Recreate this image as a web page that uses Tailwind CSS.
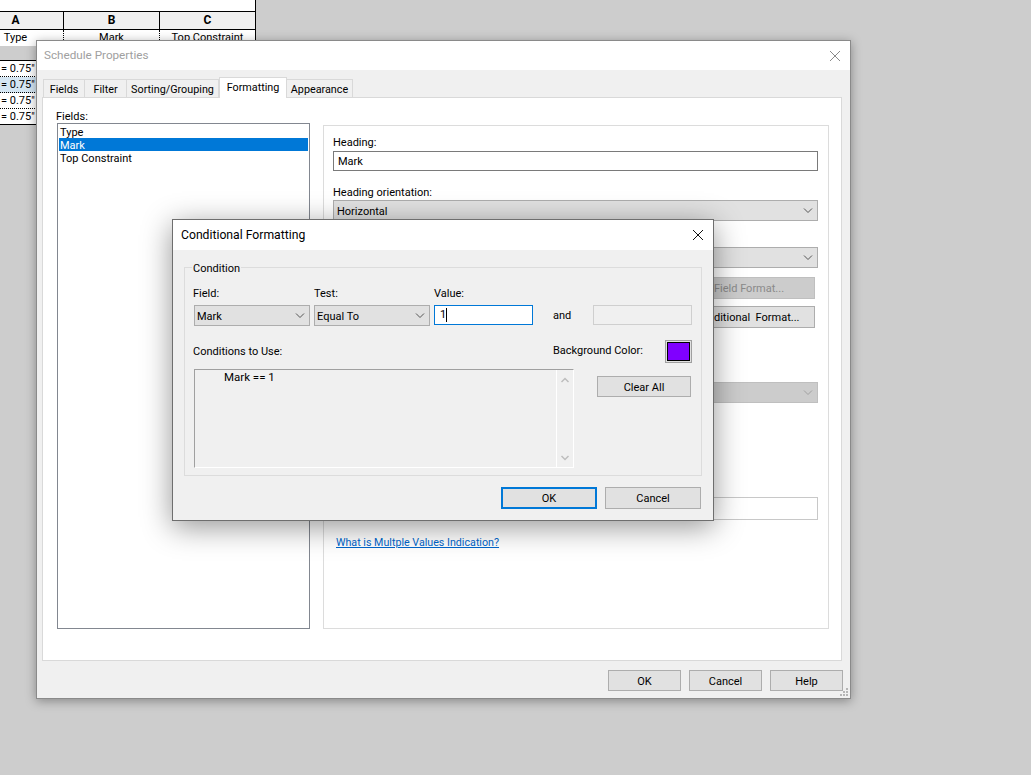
<!DOCTYPE html>
<html lang="en">
<head>
    <meta charset="UTF-8">
    <title>Conditional Formatting</title>
    <script src="https://cdn.jsdelivr.net/npm/@tailwindcss/browser@4"></script>
</head>
<body class="m-0">
<div class="relative w-[1031px] h-[775px] overflow-hidden bg-[#cdcdcd] font-['Roboto',sans-serif] text-[11px] leading-[16px] text-black">

    <!-- schedule sheet behind the dialogs -->
    <div class="absolute left-0 top-0 w-[256px] border-r border-black">
        <div class="h-[12px] bg-white border-b border-black"></div>
        <div class="grid grid-cols-[64px_96px_95px] h-[18px] bg-[#f0f0f0] border-b border-black font-bold text-[12px] text-center leading-[17px]">
            <div class="border-r border-black pr-[32px]">A</div>
            <div class="border-r border-black">B</div>
            <div>C</div>
        </div>
        <div class="grid grid-cols-[64px_96px_95px] h-[16px] bg-white text-center">
            <div class="border-r border-dotted border-black pr-[32px]">Type</div>
            <div class="border-r border-dotted border-black">Mark</div>
            <div>Top Constraint</div>
        </div>
        <div class="h-[14px] bg-[#cdcdcd]"></div>
        <div class="border-y border-black bg-white leading-[15px] whitespace-nowrap">
            <div class="h-[16px] border-b border-dotted border-black pl-[1px]">= 0.75"</div>
            <div class="h-[16px] border-b border-dotted border-black bg-[#d5e6f3] pl-[1px]">= 0.75"</div>
            <div class="h-[16px] border-b border-dotted border-black pl-[1px]">= 0.75"</div>
            <div class="h-[15px] pl-[1px]">= 0.75"</div>
        </div>
    </div>

    <!-- Schedule Properties window -->
    <div class="absolute left-[36px] top-[40px] w-[815px] h-[659px] bg-[#f0f0f0] border border-[#8a8a8a] shadow-[0_2px_10px_rgba(0,0,0,0.35)] flex flex-col">
        <div class="h-[29px] shrink-0 bg-white flex items-center justify-between pl-[7px] pr-[9px]">
            <span class="text-[#a0a0a0] text-[11.7px] -mt-[2px]">Schedule Properties</span>
            <svg class="w-[12px] h-[12px]" viewBox="0 0 12 12" fill="none" stroke="#8a8a8a" stroke-width="1"><path d="M1 1l10 10M11 1L1 11"/></svg>
        </div>

        <div class="flex items-end h-[27px] shrink-0 pl-[6px] relative z-10 text-[10.8px]">
            <div class="w-[42px] h-[18px] pt-[2px] flex items-center justify-center bg-[#f0f0f0] border border-b-0 border-[#d9d9d9]">Fields</div>
            <div class="w-[42px] h-[18px] pt-[2px] flex items-center justify-center bg-[#f0f0f0] border border-l-0 border-b-0 border-[#d9d9d9]">Filter</div>
            <div class="w-[92px] h-[18px] pt-[2px] flex items-center justify-center bg-[#f0f0f0] border border-l-0 border-b-0 border-[#d9d9d9]">Sorting/Grouping</div>
            <div class="w-[68px] h-[21px] -mb-px flex items-center justify-center bg-white border border-b-0 border-[#d9d9d9]">Formatting</div>
            <div class="w-[66px] h-[18px] pt-[2px] flex items-center justify-center bg-[#f0f0f0] border border-l-0 border-b-0 border-[#d9d9d9]">Appearance</div>
        </div>

        <div class="ml-[5px] mr-[8px] h-[564px] shrink-0 bg-white border border-[#d9d9d9] flex pl-[14px] pr-[12px]">
            <div class="w-[253px] shrink-0 pt-[11px]">
                <div class="h-[14px] -ml-[1px]">Fields:</div>
                <div class="h-[506px] border border-[#828790] px-[1px] pt-[1px]">
                    <div class="h-[13px] pl-[1px] leading-[15px]">Type</div>
                    <div class="h-[13px] pl-[1px] leading-[15px] bg-[#0078d7] text-white">Mark</div>
                    <div class="h-[13px] pl-[1px] leading-[15px]">Top Constraint</div>
                </div>
            </div>

            <div class="ml-[13px] mt-[27px] w-[506px] h-[504px] border border-[#dcdcdc] pl-[9px] pr-[10px] pt-[9px]">
                <div class="h-[16px]">Heading:</div>
                <div class="h-[20px] border border-[#7a7a7a] px-[4px] leading-[20px]">Mark</div>
                <div class="h-[14px] mt-[14px]">Heading orientation:</div>
                <div class="h-[21px] mt-[1px] bg-[#e1e1e1] border border-[#adadad] flex items-center justify-between pl-[3px] pr-[4px]">
                    <span class="mt-[2px]">Horizontal</span>
                    <svg class="w-[10px] h-[6px]" viewBox="0 0 10 6" fill="none" stroke="#555"><path d="M1 .5l4 4 4-4"/></svg>
                </div>
                <div class="h-[21px] mt-[26px] bg-[#e1e1e1] border border-[#adadad] flex items-center justify-end pr-[4px]">
                    <svg class="w-[10px] h-[6px]" viewBox="0 0 10 6" fill="none" stroke="#555"><path d="M1 .5l4 4 4-4"/></svg>
                </div>
                <div class="flex justify-end pr-[3px] mt-[9px]">
                    <div class="w-[132px] h-[22px] pt-px bg-[#cccccc] border border-[#bfbfbf] flex items-center justify-center text-[#8a8a8a]">Field Format...</div>
                </div>
                <div class="flex justify-end pr-[3px] mt-[7px]">
                    <div class="w-[146px] h-[22px] pt-px bg-[#e1e1e1] border border-[#adadad] flex items-center justify-center pl-[10px]">Conditional&nbsp; Format...</div>
                </div>
                <div class="h-[21px] mt-[54px] bg-[#cccccc] border border-[#bfbfbf] flex items-center justify-end pr-[4px]">
                    <svg class="w-[10px] h-[6px]" viewBox="0 0 10 6" fill="none" stroke="#a0a0a0"><path d="M1 .5l4 4 4-4"/></svg>
                </div>
                <div class="h-[23px] mt-[94px] border border-[#c8c8c8]"></div>
                <a class="block mt-[15px] ml-[3px] text-[10.7px] text-[#0066cc] underline">What is Multple Values Indication?</a>
            </div>
        </div>

        <div class="flex justify-end gap-[8px] pr-[7px] mt-[9px]">
            <div class="w-[73px] h-[21px] pt-[2px] bg-[#e1e1e1] border border-[#adadad] flex items-center justify-center">OK</div>
            <div class="w-[73px] h-[21px] pt-[2px] bg-[#e1e1e1] border border-[#adadad] flex items-center justify-center">Cancel</div>
            <div class="w-[73px] h-[21px] pt-[2px] bg-[#e1e1e1] border border-[#adadad] flex items-center justify-center">Help</div>
        </div>
        <!-- resize grip -->
        <svg class="absolute right-[1px] bottom-[1px] w-[9px] h-[9px]" viewBox="0 0 9 9" fill="#b5b5b5"><path d="M6 0h2v2H6zM3 3h2v2H3zM6 3h2v2H6zM0 6h2v2H0zM3 6h2v2H3zM6 6h2v2H6z"/></svg>
    </div>

    <!-- Conditional Formatting dialog -->
    <div class="absolute left-[172px] top-[219px] w-[542px] h-[302px] bg-[#f0f0f0] border border-[#6e6e6e] shadow-[0_6px_28px_rgba(0,0,0,0.42)] flex flex-col">
        <div class="h-[30px] shrink-0 bg-white flex items-center justify-between pl-[8px] pr-[9px]">
            <span class="text-[12.2px]">Conditional Formatting</span>
            <svg class="w-[12px] h-[12px]" viewBox="0 0 12 12" fill="none" stroke="#111" stroke-width="1"><path d="M1 1l10 10M11 1L1 11"/></svg>
        </div>

        <div class="relative mx-[11px] mt-[17px] h-[209px] border border-[#dcdcdc] px-[9px]">
            <span class="absolute left-[7px] -top-[7px] bg-[#f0f0f0] px-[1px]">Condition</span>

            <div class="flex mt-[18px] gap-[4px] h-[14px]">
                <div class="w-[116px] -ml-px">Field:</div>
                <div class="w-[116px] ml-px">Test:</div>
                <div class="w-[99px]">Value:</div>
            </div>
            <div class="flex gap-[4px] mt-[5px] items-start">
                <div class="w-[116px] h-[21px] bg-[#e1e1e1] border border-[#adadad] flex items-center justify-between pl-[2px] pr-[4px]">
                    <span class="mt-[2px]">Mark</span>
                    <svg class="w-[10px] h-[6px]" viewBox="0 0 10 6" fill="none" stroke="#555"><path d="M1 .5l4 4 4-4"/></svg>
                </div>
                <div class="w-[116px] h-[21px] bg-[#e1e1e1] border border-[#adadad] flex items-center justify-between pl-[2px] pr-[4px]">
                    <span class="mt-[2px]">Equal To</span>
                    <svg class="w-[10px] h-[6px]" viewBox="0 0 10 6" fill="none" stroke="#555"><path d="M1 .5l4 4 4-4"/></svg>
                </div>
                <div class="w-[99px] h-[20px] bg-white border border-[#0078d7] pl-[5px] flex items-center">
                    <span>1</span><span class="w-px h-[14px] bg-black"></span>
                </div>
                <div class="w-[52px] h-[20px] pt-[2px] flex items-center pl-[16px]">and</div>
                <div class="w-[99px] h-[20px] border border-[#cfcfcf]"></div>
            </div>

            <div class="flex mt-[14px] h-[23px]">
                <div class="w-[359px] pt-[4px] -ml-px mr-px">Conditions to Use:</div>
                <div class="w-[112px] pt-[3px]">Background Color:</div>
                <div class="w-[27px] h-[23px] bg-[#e1e1e1] border border-[#a0a0a0] p-[1px]">
                    <div class="h-full bg-[#8000ff] border border-black"></div>
                </div>
            </div>

            <div class="flex mt-[6px] items-start">
                <div class="w-[380px] h-[99px] shrink-0 border border-[#a0a0a0] border-r-white border-b-white flex">
                    <div class="flex-1 pl-[29px] text-[11.5px] leading-[14px]">Mark == 1</div>
                    <div class="w-[17px] border-l border-white flex flex-col justify-between items-center pt-[7px] pb-[6px]">
                        <svg class="w-[8px] h-[6px]" viewBox="0 0 8 6" fill="none" stroke="#bdbdbd" stroke-width="1.5"><path d="M.5 5L4 1.5 7.5 5"/></svg>
                        <svg class="w-[8px] h-[6px]" viewBox="0 0 8 6" fill="none" stroke="#bdbdbd" stroke-width="1.5"><path d="M.5 1L4 4.5 7.5 1"/></svg>
                    </div>
                </div>
                <div class="ml-[23px] mt-[7px] w-[94px] h-[21px] pt-[2px] bg-[#e1e1e1] border border-[#adadad] flex items-center justify-center">Clear All</div>
            </div>
        </div>

        <div class="flex justify-end gap-[8px] pr-[12px] mt-[11px]">
            <div class="w-[96px] h-[22px] pt-px bg-[#e1e1e1] border-2 border-[#0078d7] flex items-center justify-center">OK</div>
            <div class="w-[96px] h-[22px] pt-px bg-[#e1e1e1] border border-[#adadad] flex items-center justify-center">Cancel</div>
        </div>
    </div>
</div>
</body>
</html>
